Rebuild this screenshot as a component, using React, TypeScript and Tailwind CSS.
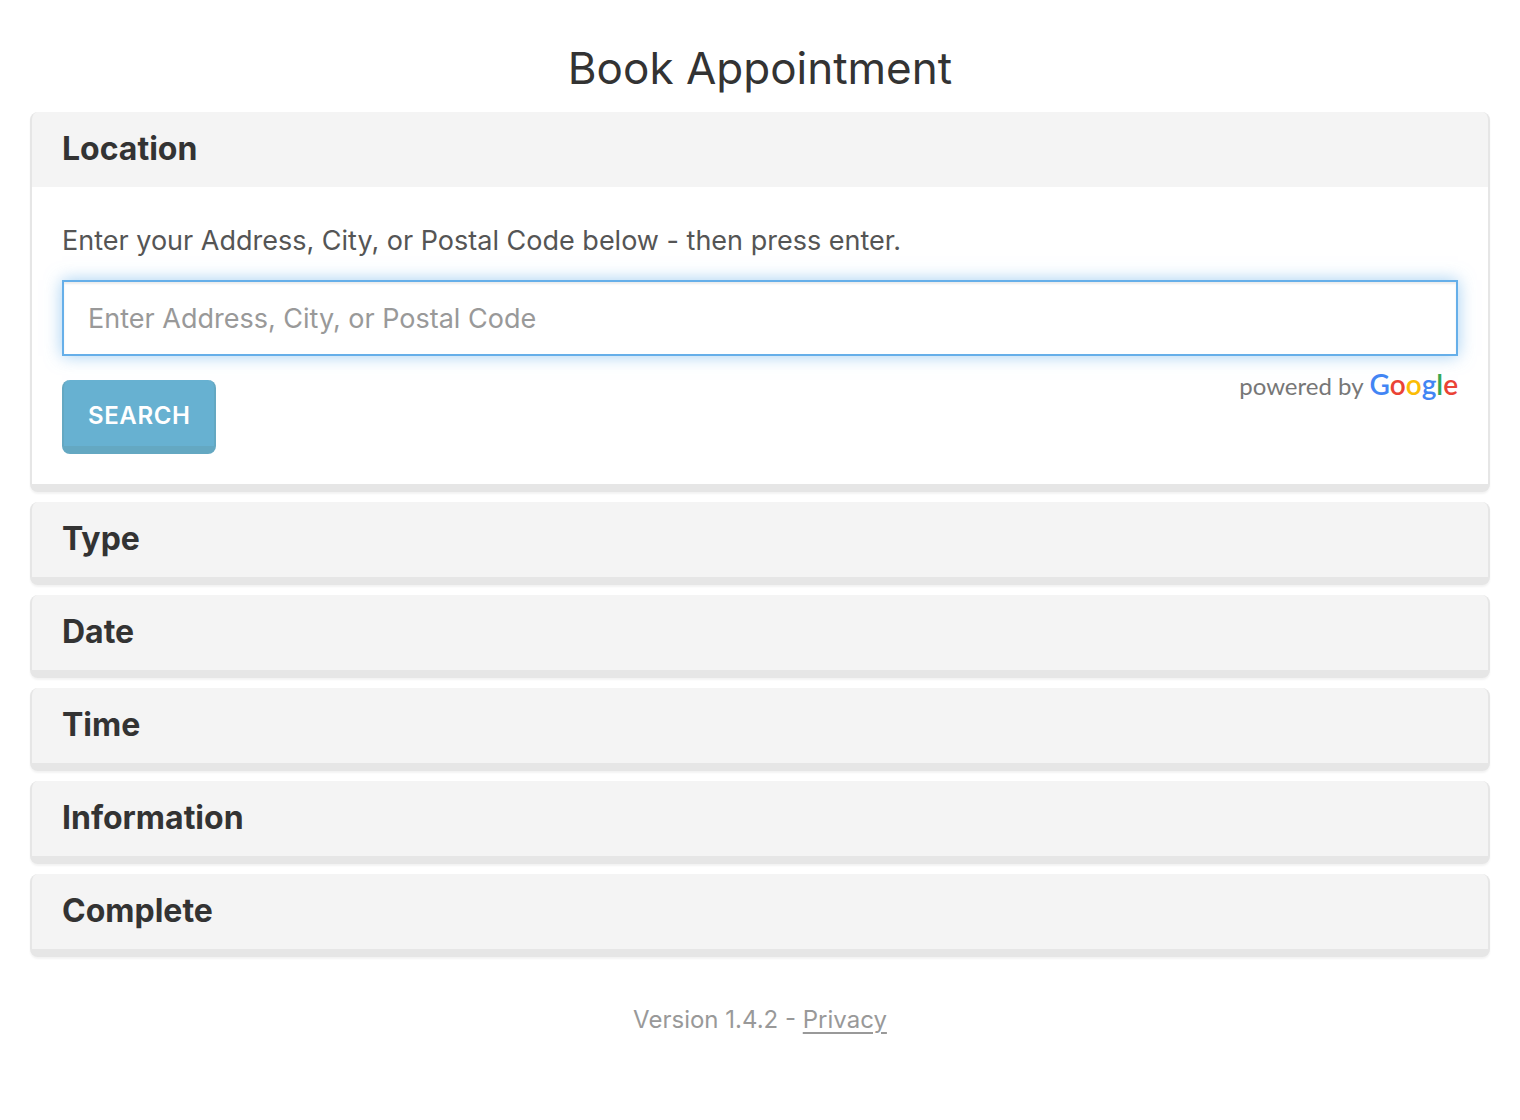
import { useState } from "react";

const steps = ["Type", "Date", "Time", "Information", "Complete"];

const panelClass =
  "rounded-lg border-x-2 border-b-8 border-[#e6e6e6] bg-[#f4f4f4] shadow-[0_2px_2px_rgba(0,0,0,0.05)]";

function PanelTitle({ text }: { text: string }) {
  return (
    <h2 className="px-[30px] pt-[17px] pb-[18px] text-[32px] leading-10 font-bold text-[#333]">
      {text}
    </h2>
  );
}

function PoweredByGoogle() {
  return (
    <p className="flex items-baseline gap-[6px] font-[Lato,sans-serif] text-2xl leading-8 text-[#777]">
      <span>powered by</span>
      <span className="text-[28px] font-semibold">
        <span className="text-[#4285f4]">G</span>
        <span className="text-[#ea4335]">o</span>
        <span className="text-[#fbbc05]">o</span>
        <span className="text-[#4285f4]">g</span>
        <span className="text-[#34a853]">l</span>
        <span className="text-[#ea4335]">e</span>
      </span>
    </p>
  );
}

export default function App() {
  const [address, setAddress] = useState("");

  return (
    <main className="min-h-screen bg-white px-[30px] pt-9 pb-16 font-[Inter,sans-serif]">
      <h1 className="mb-3 text-center text-[44px] leading-[64px] text-[#333]">
        Book Appointment
      </h1>

      <div className="flex flex-col gap-[10px]">
        {/* Location */}
        <section className={panelClass}>
          <PanelTitle text="Location" />
          <form
            className="bg-white px-[30px] pt-[34px] pb-[30px]"
            onSubmit={(e) => e.preventDefault()}
          >
            <label htmlFor="address" className="block text-[27px] leading-10 text-[#555]">
              Enter your Address, City, or Postal Code below - then press enter.
            </label>
            <input
              id="address"
              type="text"
              placeholder="Enter Address, City, or Postal Code"
              value={address}
              onChange={(e) => setAddress(e.target.value)}
              className="mt-[19px] block h-[76px] w-full border-2 border-[#66afe9] px-6 text-[27px] text-[#555] shadow-[inset_0_2px_2px_rgba(0,0,0,0.075),0_0_16px_rgba(102,175,233,0.6)] outline-none placeholder:text-[#999]"
            />
            <div className="flex items-start justify-between pt-6">
              <button
                type="submit"
                className="h-[74px] rounded-lg border-x-2 border-b-8 border-[#64a8c2] bg-[#67b1d1] px-6 pt-[6px] text-2xl font-semibold tracking-wide text-white"
              >
                SEARCH
              </button>
              <div className="-mt-3">
                <PoweredByGoogle />
              </div>
            </div>
          </form>
        </section>

        {/* Remaining steps, collapsed */}
        {steps.map((step) => (
          <section key={step} className={panelClass}>
            <PanelTitle text={step} />
          </section>
        ))}
      </div>

      <footer className="pt-[45px] text-center text-2xl leading-9 text-[#999]">
        Version 1.4.2 -{" "}
        <a href="#privacy" className="underline decoration-2 underline-offset-4">
          Privacy
        </a>
      </footer>
    </main>
  );
}
